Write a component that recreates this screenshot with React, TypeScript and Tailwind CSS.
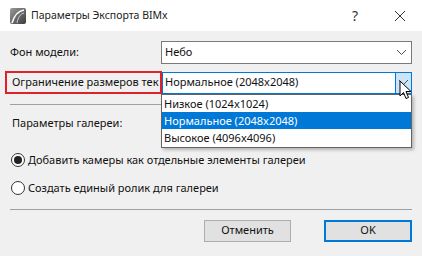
const font = "font-['Segoe_UI','Noto_Sans','Open_Sans',sans-serif]";

const Chevron = ({ className = "" }: { className?: string }) => (
  <svg width="11" height="7" viewBox="0 0 11 7" className={className}>
    <path d="M1 1l4.5 4.5L10 1" fill="none" stroke="#505050" strokeWidth="1" />
  </svg>
);

const Radio = ({ checked }: { checked?: boolean }) => (
  <span className="w-[14px] h-[14px] rounded-full border border-[#333] bg-white flex items-center justify-center shrink-0">
    {checked && <span className="w-[8px] h-[8px] rounded-full bg-[#222]" />}
  </span>
);

export default function App() {
  return (
    <div
      className={`relative w-[422px] h-[256px] overflow-hidden bg-[#f0f0f0] text-[11px] text-[#111] ${font}`}
    >
      {/* Title bar */}
      <div className="h-[31px] bg-white flex items-center pl-[10px] pr-[16px]">
        <svg width="16" height="16" viewBox="0 0 16 16">
          <defs>
            <linearGradient id="ic" x1="0" y1="0" x2="1" y2="1">
              <stop offset="0" stopColor="#9a9a9a" />
              <stop offset="1" stopColor="#3c3c3c" />
            </linearGradient>
          </defs>
          <rect x="0" y="0" width="16" height="16" rx="2" fill="url(#ic)" />
          <path d="M2 15C4 8 8 3 14 2" fill="none" stroke="#fff" strokeWidth="1.6" />
          <path d="M7 15C8 10 10 6 14 5" fill="none" stroke="#d0d0d0" strokeWidth="1" />
        </svg>
        <span className="ml-[5px] text-[10.5px] text-[#222]">Параметры Экспорта BIMx</span>
        <span className="ml-auto text-[14px] text-[#333]">?</span>
        <svg width="12" height="12" viewBox="0 0 12 12" className="ml-[36px]">
          <path d="M1 1l10 10M11 1L1 11" stroke="#333" strokeWidth="1" />
        </svg>
      </div>

      {/* Body */}
      <div className="px-[10px] pt-[10px]">
        <div className="flex items-center h-[23px]">
          <span className="w-[151px]">Фон модели:</span>
          <div className="flex-1 h-[23px] bg-white border border-[#7a7a7a] flex items-center pl-[3px] pr-[4px]">
            <span>Небо</span>
            <Chevron className="ml-auto" />
          </div>
        </div>

        <div className="flex items-center h-[23px] mt-[7px]">
          <span className="-ml-[5px] w-[157px] h-[23px] border-2 border-[#e0202a] flex items-center pl-[5px] whitespace-nowrap overflow-hidden">
            Ограничение размеров тек
          </span>
          <div className="flex-1 h-[22px] bg-white border border-[#0078d7] flex items-center pl-[2px]">
            <span>Нормальное (2048x2048)</span>
            <div className="ml-auto w-[16px] h-full bg-[#cce4f7] border-l border-[#0078d7] flex items-center justify-center">
              <Chevron />
            </div>
          </div>
        </div>

        <div className="mt-[10px] h-px bg-[#a0a0a0]" />

        <div className="mt-[10px] pl-[2px]">Параметры галереи:</div>

        <label className="mt-[20px] flex items-center gap-[3px] pl-[1px]">
          <Radio checked />
          <span>Добавить камеры как отдельные элементы галереи</span>
        </label>
        <label className="mt-[12px] flex items-center gap-[3px] pl-[1px]">
          <Radio />
          <span>Создать единый ролик для галереи</span>
        </label>

        <div className="mt-[12px] h-px bg-[#a0a0a0]" />

        <div className="mt-[10px] flex justify-end gap-[33px]">
          <button className="w-[87px] h-[22px] bg-[#e1e1e1] border border-[#adadad] text-[11px]">
            Отменить
          </button>
          <button className="w-[88px] h-[22px] bg-[#e1e1e1] border-2 border-[#0078d7] text-[11px]">
            OK
          </button>
        </div>
      </div>

      {/* Open dropdown list */}
      <div className="absolute left-[161px] top-[94px] w-[251px] bg-white border border-[#646464] shadow-[2px_2px_3px_rgba(0,0,0,0.25)] py-[1px]">
        <div className="h-[16px] leading-[16px] pl-[2px]">Низкое (1024x1024)</div>
        <div className="h-[17px] leading-[17px] pl-[2px] bg-[#0078d7] text-white">Нормальное (2048x2048)</div>
        <div className="h-[17px] leading-[17px] pl-[2px]">Высокое (4096x4096)</div>
      </div>

      {/* Mouse cursor */}
      <svg width="14" height="21" viewBox="0 0 14 21" className="absolute left-[399px] top-[80px]">
        <path d="M1 1v15l3.5-3.5 2.5 6 2.5-1-2.5-6H12z" fill="#fff" stroke="#000" strokeWidth="1" strokeLinejoin="round" />
      </svg>
    </div>
  );
}
